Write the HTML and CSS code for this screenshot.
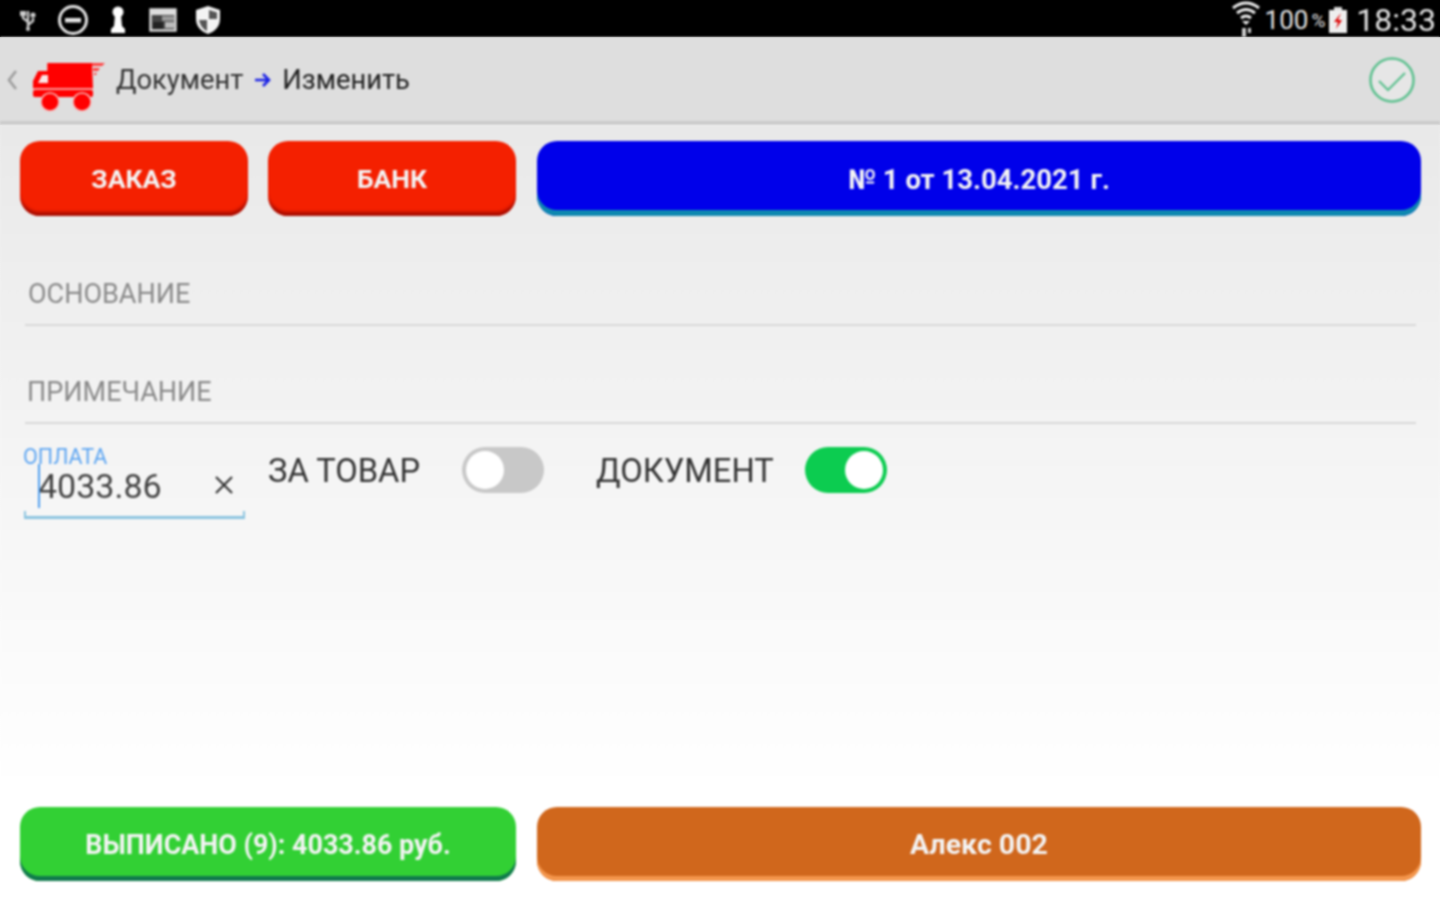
FILE: index.html
```html
<!DOCTYPE html>
<html>
<head>
    <meta charset="utf-8">
    <link rel="stylesheet" href="styles.css">
</head>
<body>

<div class="statusbar">
  <div class="status-icons">
    <svg width="16" height="24" viewBox="0 0 16 24"><path d="M8 3v18M8 14L3 10V7M8 17l5-4v-3" fill="none" stroke="#ccc" stroke-width="2.4"/><rect x="0" y="3" width="6" height="5" fill="#ccc"/><circle cx="13" cy="7" r="2.6" fill="#ccc"/><circle cx="8" cy="21" r="2" fill="#ccc"/></svg>
    <svg width="32" height="30" viewBox="0 0 32 30"><circle cx="16" cy="15" r="13.5" fill="none" stroke="#e4e4e4" stroke-width="3"/><rect x="8" y="13" width="16" height="4.5" fill="#e4e4e4"/></svg>
    <svg width="18" height="28" viewBox="0 0 18 28"><circle cx="9" cy="6" r="5.5" fill="#fff"/><path d="M6 9h6l1 11 3 3v4H2v-4l3-3z" fill="#fff"/></svg>
    <svg width="28" height="24" viewBox="0 0 28 24"><rect x="1.5" y="1.5" width="25" height="21" fill="#444" stroke="#ddd" stroke-width="2.4"/><rect x="2" y="2" width="24" height="5" fill="#ddd"/><rect x="13" y="8" width="12" height="5" fill="#999"/><rect x="4" y="14" width="10" height="7" fill="#222"/><rect x="16" y="14" width="9" height="6" fill="#bbb"/></svg>
    <svg width="28" height="30" viewBox="0 0 28 30"><path d="M14 1l12 4v9c0 8-6 13-12 15C8 27 2 22 2 14V5z" fill="#f4f4f4"/><path d="M15 5l8 2.5V14h-8zM13 15v11c-4-2-7-6-8-11z" fill="#555"/></svg>
  </div>
  <div class="status-right">
    <svg class="ic-wifi" width="30" height="38" viewBox="0 0 30 38"><path d="M2 7Q15-3 28 7M6 12q9-7 18 0M10 17q5-4 10 0" fill="none" stroke="#eee" stroke-width="3"/><path d="M15 24l-4-4h8z" fill="#eee"/><path d="M11 27h4v9h-4zM17 27h3v5h-3z" fill="#ccc"/></svg>
    <span class="pct">100</span><span class="pct-sign">%</span>
    <svg class="ic-batt" width="20" height="26" viewBox="0 0 20 26"><rect x="6" y="0" width="8" height="3" fill="#ddd"/><rect x="1" y="3" width="18" height="23" fill="#eee"/><path d="M13 6l-7 9h4l-2 7 6-9h-4z" fill="#d00"/></svg>
    <span class="clock">18:33</span>
  </div>
</div>

<div class="titlebar">
  <svg class="back" width="12" height="22" viewBox="0 0 12 22"><path d="M10 2L3 11l7 9" fill="none" stroke="#a0a0a0" stroke-width="2.8"/></svg>
  <svg class="logo" width="72" height="50" viewBox="0 0 72 50">
    <path d="M15 1h44l1 25H0V19l5-10h10z" fill="#f00"/>
    <path d="M14.500 1v8" stroke="#f44" stroke-width="1"/>
    <path d="M5 21l4-8h6v8z" fill="#fbe6e6"/>
    <rect x="0" y="26" width="60" height="2" fill="#fa9a9a"/>
    <rect x="0" y="28" width="60" height="7" rx="2" fill="#f00"/>
    <path d="M59 1h13l-3 3H59zM60 6h7l-2 3h-5zM61 11h3l-1 2h-2z" fill="#f44"/>
    <circle cx="17" cy="40" r="9" fill="#f00" stroke="#f6bcbc" stroke-width="1.500"/>
    <circle cx="49" cy="40" r="9" fill="#f00" stroke="#f6bcbc" stroke-width="1.500"/>
  </svg>
  <span class="crumb">Документ</span>
  <svg class="crumb-arrow" width="18" height="16" viewBox="0 0 18 16"><path d="M1 8h14M9 2l6 6-6 6" fill="none" stroke="#1a22e6" stroke-width="2.6"/></svg>
  <span class="crumb crumb-dark">Изменить</span>
  <svg class="ok" width="46" height="46" viewBox="0 0 46 46"><circle cx="23" cy="23" r="21.500" fill="#e6e6e6" stroke="#5cc08e" stroke-width="2.500"/><path d="M10 24l9 9 17-17" fill="none" stroke="#5cc08e" stroke-width="2.200"/></svg>
</div>

<div class="content">
  <div class="btn-row">
    <div class="btn btn-red btn-zakaz">ЗАКАЗ</div>
    <div class="btn btn-red btn-bank">БАНК</div>
    <div class="btn btn-blue btn-wide">№ 1 от 13.04.2021 г.</div>
  </div>

  <div class="field field-first"><span>ОСНОВАНИЕ</span></div>
  <div class="field field-second"><span>ПРИМЕЧАНИЕ</span></div>

  <div class="pay-row">
    <div class="pay">
      <label class="pay-label">ОПЛАТА</label>
      <div class="pay-value"><i class="caret"></i>4033.86</div>
      <svg class="clear" width="20" height="20" viewBox="0 0 20 20"><path d="M2 2l16 16M18 2L2 18" stroke="#333" stroke-width="2.200"/></svg>
    </div>
    <span class="opt opt-tovar">ЗА ТОВАР</span>
    <div class="toggle"><i></i></div>
    <span class="opt opt-doc">ДОКУМЕНТ</span>
    <div class="toggle on"><i></i></div>
  </div>

  <div class="btn-row bottom">
    <div class="btn btn-green btn-half">ВЫПИСАНО (9): 4033.86 руб.</div>
    <div class="btn btn-orange btn-wide">Алекс 002</div>
  </div>
</div>

</body>
</html>
```

FILE: styles.css
```css
html, body {
  margin: 0;
  height: 100%;
}

/* backdrop repeats the bar colours so the blur has no pale page edge */
body {
  width: 1440px;
  height: 900px;
  overflow: hidden;
  font-family: "Roboto", "Liberation Sans", sans-serif;
  background: linear-gradient(#000 37px, #dedede 37px, #dedede 125px, #eee 125px, #fff 780px);
  display: flex;
  flex-direction: column;
}

/* the source is a soft, upscaled capture */
.statusbar, .titlebar, .content {
  filter: blur(.8px);
}

.statusbar {
  height: 37px;
  box-sizing: border-box;
  background-color: #000;
  display: flex;
  align-items: center;
  justify-content: space-between;
  padding: 3px 4px 0 5px;
  flex: none;
}

.status-icons {
  display: grid;
  grid-template-columns: repeat(5, 45px);
  justify-items: center;
  align-items: center;
}

.status-right {
  display: flex;
  align-items: center;
  color: #e4e4e4;
}

.ic-wifi {
  margin-right: 4px;
}

.pct {
  font-size: 26px;
  font-weight: 400;
}

.pct-sign {
  font-size: 19px;
  margin: 0 3px 0 3px;
}

.clock {
  font-size: 32px;
  font-weight: 400;
  margin-left: 8px;
}

.titlebar {
  height: 88px;
  flex: none;
  box-sizing: border-box;
  background-color: #dedede;
  border-bottom: 4px solid #cbcbcb;
  display: flex;
  align-items: center;
  padding: 2px 25px 0 6px;
}

.back {
  margin-right: 15px;
}

.logo {
  margin: 14px 11px 0 0;
}

.crumb {
  font-size: 27.300px;
  color: #333;
}

.crumb-dark {
  color: #222;
}

.crumb-arrow {
  margin: 0 10px 0 11px;
}

.ok {
  margin-left: auto;
}

.content {
  flex: 1;
  display: flex;
  flex-direction: column;
  padding: 16px 19px 19px 20px;
  background: linear-gradient(#e9e9e9, #f5f5f5 45%, #fff 85%);
}

.btn-row {
  display: flex;
  gap: 20px;
}

.btn {
  height: 75px;
  box-sizing: border-box;
  border-radius: 20px;
  color: #f4f4f4;
  font-size: 27.500px;
  font-weight: 700;
  display: flex;
  align-items: center;
  justify-content: center;
  padding-top: 2px;
}

.btn-zakaz {
  width: 228px;
  font-size: 26.500px;
}

.btn-bank {
  width: 248px;
  font-size: 26.500px;
}

.btn-half {
  width: 496px;
  font-size: 26.900px;
}

.btn-wide {
  width: 884px;
  margin-left: 1px;
}

.btn-red {
  background-color: #f42000;
  box-shadow: inset 0 -5px 3px -1px #a80c00;
  padding-top: 0;
}

.btn-blue {
  background-color: #0000ea;
  box-shadow: inset 0 -6px 0 #0e88b0;
}

.btn-green {
  background-color: #32d034;
  box-shadow: inset 0 -5px 0 #107a4c;
}

.btn-orange {
  background-color: #d0671c;
  box-shadow: inset 0 -5px 0 #f4964c;
  font-size: 28.500px;
  padding-top: 0;
}

.field {
  margin: 0 5px;
  border-bottom: 2px solid #d8d8d8;
  color: #8a8a8a;
  font-size: 27px;
  line-height: 32px;
  box-sizing: border-box;
  padding-left: 3px;
}

.field-first {
  margin-top: 62px;
  height: 48px;
}

.field-second {
  margin-top: 50px;
  height: 48px;
  padding-left: 2px;
}

.pay-row {
  display: flex;
  align-items: flex-start;
  margin-top: 22px;
}

.pay {
  position: relative;
  width: 221px;
  height: 73px;
  margin-left: 4px;
  box-sizing: border-box;
  border-bottom: 3px solid #8cc4e0;
}

.pay::before, .pay::after {
  content: "";
  position: absolute;
  bottom: 0;
  width: 2px;
  height: 5px;
  background-color: #8cc4e0;
}

.pay::before {
  left: 0;
}

.pay::after {
  right: 0;
}

.pay-label {
  position: absolute;
  left: -1px;
  top: -2px;
  font-size: 21.500px;
  color: #5ea6f2;
}

.pay-value {
  position: absolute;
  left: 14px;
  top: 19px;
  font-size: 34px;
  color: #444;
  line-height: 42px;
}

.caret {
  position: absolute;
  left: 0;
  top: -1px;
  height: 44px;
  width: 2px;
  background-color: #4f9ff0;
}

.clear {
  position: absolute;
  right: 11px;
  top: 29px;
}

.opt {
  font-size: 32.700px;
  color: #333;
  line-height: 50px;
}

.opt-tovar {
  margin-left: 23px;
}

.opt-doc {
  margin-left: 52px;
}

.toggle {
  width: 82px;
  height: 46px;
  box-sizing: border-box;
  border-radius: 23px;
  background-color: #c8c8c8;
  padding: 4px;
  margin-left: 42px;
  margin-top: 1px;
  display: flex;
}

.toggle i {
  width: 38px;
  height: 38px;
  border-radius: 50%;
  background-color: #fff;
}

.toggle.on {
  background-color: #0ccc50;
  justify-content: flex-end;
  margin-left: 31px;
}

.bottom {
  margin-top: auto;
}

.bottom .btn {
  height: 74px;
}
```
